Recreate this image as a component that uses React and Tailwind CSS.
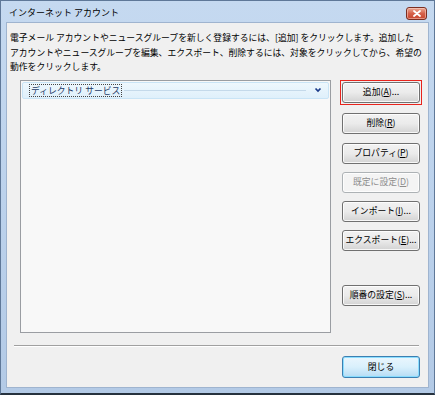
import React from "react";

function Btn({ label, u, rest, disabled, focused, className = "" }) {
  const base = disabled
    ? "border-[#adb2b5] bg-[#f4f4f4] text-[#8d8d8d]"
    : "border-[#707070] bg-gradient-to-b from-[#f2f2f2] via-[#ebebeb] to-[#d3d3d3] text-black";
  const inner = (
    <div
      className={`h-[21px] w-[78px] rounded-[3px] border flex items-center justify-center text-[8.8px] shadow-[inset_0_0_0_1px_rgba(255,255,255,0.8)] ${base}`}
    >
      <span>
        {label}
        {u && (
          <>
            (<u>{u}</u>){rest}
          </>
        )}
      </span>
    </div>
  );
  if (focused) {
    return (
      <div className={`box-content border border-[#e8231c] w-[80px] h-[23px] -mx-[1px] -my-[1px] flex items-center justify-center ${className}`}>
        {inner}
      </div>
    );
  }
  return <div className={`w-[80px] h-[23px] flex items-center justify-center ${className}`}>{inner}</div>;
}

export default function App() {
  return (
    <div className="w-[435px] h-[395px] flex flex-col bg-gradient-to-b from-[#c5d9f0] via-[#bcd2ec] to-[#b3cae6] border border-[#5f7898] border-b-[2px] border-b-[#26323e] font-['Noto_Sans_CJK_JP','Noto_Sans',sans-serif] text-black overflow-hidden">
      {/* title bar */}
      <div className="h-[21px] flex items-center justify-between pl-[8px] pr-[7px] shrink-0">
        <span className="text-[9px] text-black pt-[2px]">インターネット アカウント</span>
        <div className="w-[21px] h-[13px] mt-[3px] rounded-[3px] border border-[#7b2e22] bg-gradient-to-b from-[#eaa894] via-[#d5604a] to-[#c8452e] flex items-center justify-center shadow-[inset_0_0_0_1px_rgba(255,220,210,0.5)]">
          <svg width="8" height="7" viewBox="0 0 8 7">
            <path d="M1 1 L7 6 M7 1 L1 6" stroke="#ffffff" strokeWidth="1.8" strokeLinecap="round" />
          </svg>
        </div>
      </div>

      {/* client area */}
      <div className="flex-1 mx-[5px] mb-[5px] bg-[#f0f0f0] border border-[#9fb4cf] flex flex-col">
        <div className="pl-[3px] pt-[8px] text-[8.8px] leading-[14.5px] whitespace-nowrap">
          <div>電子メール アカウントやニュースグループを新しく登録するには、[追加] をクリックします。追加した</div>
          <div>アカウントやニュースグループを編集、エクスポート、削除するには、対象をクリックしてから、希望の</div>
          <div>動作をクリックします。</div>
        </div>

        <div className="flex mt-[5px]">
          {/* list */}
          <div className="ml-[13px] w-[311px] h-[253px] border border-[#9a9da2] bg-[#f8f8f8] p-[1px]">
            <div className="h-[17px] rounded-[2px] border border-[#c9e4f6] bg-gradient-to-b from-[#eef7fd] to-[#dff0fb] flex items-center pl-[6px] pr-[6px]">
              <span className="text-[8.8px] leading-[11px] text-[#1e3a66] border border-dotted border-[#444] px-[1px] whitespace-nowrap">
                ディレクトリ サービス
              </span>
              <div className="flex-1 h-px bg-[#c4d9ea] mx-[2px]" />
              <svg width="8" height="6" viewBox="0 0 8 6" className="ml-[6px]">
                <path d="M1.5 1.5 L4 4 L6.5 1.5" stroke="#1b3b8a" strokeWidth="1.7" fill="none" />
              </svg>
            </div>
          </div>

          {/* buttons */}
          <div className="ml-[10px] pt-[1px] flex flex-col">
            <Btn label="追加" u="A" rest="..." focused />
            <Btn label="削除" u="R" className="mt-[8px]" />
            <Btn label="プロパティ" u="P" className="mt-[7px]" />
            <Btn label="既定に設定" u="D" disabled className="mt-[6px]" />
            <Btn label="インポート" u="I" rest="..." className="mt-[6px]" />
            <Btn label="エクスポート" u="E" rest="..." className="mt-[6px]" />
            <Btn label="順番の設定" u="S" rest="..." className="mt-[32px]" />
          </div>
        </div>

        {/* separator */}
        <div className="ml-[7px] w-[405px] mt-[12px] border-t border-[#a0a0a0] border-b border-b-white" />

        <div className="flex mt-[9px] ml-[335px]">
          <div className="w-[78px] h-[22px] rounded-[3px] border border-[#3c7fb1] bg-gradient-to-b from-[#eaf6fd] via-[#d9f0fc] to-[#b5dcf4] flex items-center justify-center text-[8.8px] shadow-[inset_0_0_0_1px_rgba(130,220,255,0.9)]">
            閉じる
          </div>
        </div>
      </div>
    </div>
  );
}
